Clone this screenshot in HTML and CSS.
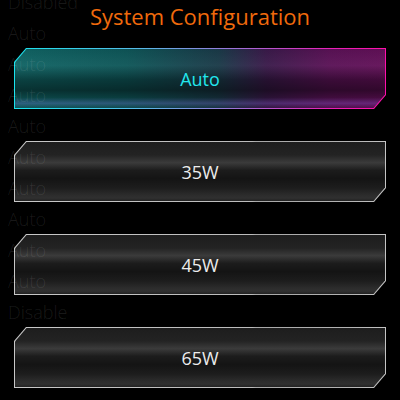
FILE: index.html
```html
<!DOCTYPE html>
<html lang="en">
<head>
  <meta charset="UTF-8" />
  <title>System Configuration</title>
  <link rel="stylesheet" href="styles.css">
</head>
<body>
  <div class="screen">
    <h1 class="title">System Configuration</h1>
    <div class="options">
      <div class="option active"><div class="option-inner">Auto</div></div>
      <div class="option"><div class="option-inner">35W</div></div>
      <div class="option"><div class="option-inner">45W</div></div>
      <div class="option"><div class="option-inner">65W</div></div>
    </div>

    <ul class="ghost-list">
      <li>Disabled</li>
      <li>Auto</li>
      <li>Auto</li>
      <li>Auto</li>
      <li>Auto</li>
      <li>Auto</li>
      <li>Auto</li>
      <li>Auto</li>
      <li>Auto</li>
      <li>Auto</li>
      <li>Disable</li>
    </ul>
  </div>
</body>
</html>
```

FILE: styles.css
```css
* {
  margin: 0;
  padding: 0;
  box-sizing: border-box;
}
html, body {
  background: #000;
  font-family: 'Open Sans', 'Noto Sans', sans-serif;
}
.screen {
  position: relative;
  width: 400px;
  height: 400px;
  overflow: hidden;
}
.title {
  height: 48px;
  padding-top: 1px;
  text-align: center;
  color: #f06a0c;
  font-size: 22px;
  font-weight: 400;
  line-height: 30px;
}
.options {
  display: flex;
  flex-direction: column;
  gap: 32px;
  padding: 0 14px;
}
.option {
  height: 61px;
  padding: 1px;
  background: linear-gradient(to right, #c8c8c8, #bcbcbc 64%, #a8a8a8 65%, #b4b4b4 90%, #c4c4c4);
  clip-path: polygon(12px 0, 100% 0, 100% calc(100% - 14px), calc(100% - 12px) 100%, 0 100%, 0 14px);
}
.option-inner {
  height: 100%;
  display: flex;
  align-items: center;
  justify-content: center;
  color: #ececec;
  font-size: 18px;
  clip-path: polygon(11.5px 0, 100% 0, 100% calc(100% - 13.5px), calc(100% - 11.5px) 100%, 0 100%, 0 13.5px);
  background: linear-gradient(to bottom, #1d1d1d 0%, #232323 22%, #3b3b3b 35%, #1c1c1c 48%, #141414 62%, #1d1d1d 78%, #2c2c2c 90%, #303030 95%, #222 100%);
}
.option.active {
  background: linear-gradient(to right, #19e4ee 0%, #5ab8e8 35%, #a070d8 60%, #e820b8 85%, #ff10aa 100%);
}
.option.active .option-inner {
  color: #22e6ee;
  background:
    linear-gradient(to bottom, rgba(0,0,0,0.05) 0%, rgba(255,255,255,0.04) 28%, rgba(0,0,0,0.35) 52%, rgba(0,0,0,0.5) 70%, rgba(0,0,0,0.3) 82%, rgba(120,90,200,0.28) 92%, rgba(0,0,0,0.15) 100%),
    linear-gradient(to right, #106464 0%, #0e5658 30%, #1a3a48 55%, #3a1a4a 68%, #5a1256 85%, #621058 100%);
}
.ghost-list {
  position: absolute;
  top: -13px;
  left: 8px;
  list-style: none;
  color: rgba(255, 255, 255, 0.1);
  font-size: 18px;
  font-weight: 300;
  line-height: 31px;
  pointer-events: none;
}
```
